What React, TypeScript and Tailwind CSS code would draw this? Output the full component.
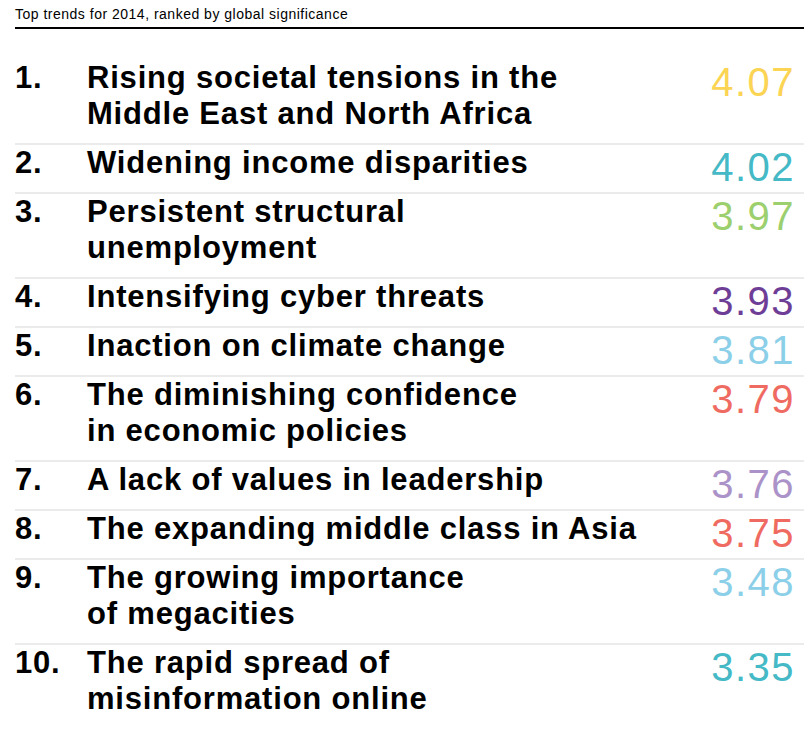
import React from "react";

const rows: { n: string; lines: string[]; v: string; c: string }[] = [
  { n: "1.", lines: ["Rising societal tensions in the", "Middle East and North Africa"], v: "4.07", c: "text-[#fbd454]" },
  { n: "2.", lines: ["Widening income disparities"], v: "4.02", c: "text-[#45b9c6]" },
  { n: "3.", lines: ["Persistent structural", "unemployment"], v: "3.97", c: "text-[#9ccf6e]" },
  { n: "4.", lines: ["Intensifying cyber threats"], v: "3.93", c: "text-[#6e3e96]" },
  { n: "5.", lines: ["Inaction on climate change"], v: "3.81", c: "text-[#8ccfe8]" },
  { n: "6.", lines: ["The diminishing confidence", "in economic policies"], v: "3.79", c: "text-[#ef6b61]" },
  { n: "7.", lines: ["A lack of values in leadership"], v: "3.76", c: "text-[#ab92c8]" },
  { n: "8.", lines: ["The expanding middle class in Asia"], v: "3.75", c: "text-[#ef6b61]" },
  { n: "9.", lines: ["The growing importance", "of megacities"], v: "3.48", c: "text-[#8ccfe8]" },
  { n: "10.", lines: ["The rapid spread of", "misinformation online"], v: "3.35", c: "text-[#45b9c6]" },
];

export default function App() {
  return (
    <div className="w-[804px] h-[735px] bg-white pl-[15px] font-['Liberation_Sans',Arial,sans-serif] text-black overflow-hidden">
      <div className="border-b-2 border-black pt-[6px] pb-[5px] text-[14px] leading-[16px] tracking-[0.5px]">
        Top trends for 2014, ranked by global significance
      </div>
      <div className="mt-[31px]">
        {rows.map((r, i) => (
          <div
            key={r.n}
            className={`flex items-start pb-[11px] ${i > 0 ? "border-t-2 border-[#ebebeb]" : ""}`}
          >
            <div className="w-[72px] shrink-0 text-[31px] font-bold leading-[36px] tracking-[0.8px]">{r.n}</div>
            <div className="flex-1 text-[31px] font-bold leading-[36px] tracking-[0.8px] whitespace-nowrap">
              {r.lines.map((l) => (
                <div key={l}>{l}</div>
              ))}
            </div>
            <div className={`pr-[9px] pt-[8px] text-[40px] leading-[28px] tracking-[1.5px] ${r.c}`}>{r.v}</div>
          </div>
        ))}
      </div>
    </div>
  );
}
